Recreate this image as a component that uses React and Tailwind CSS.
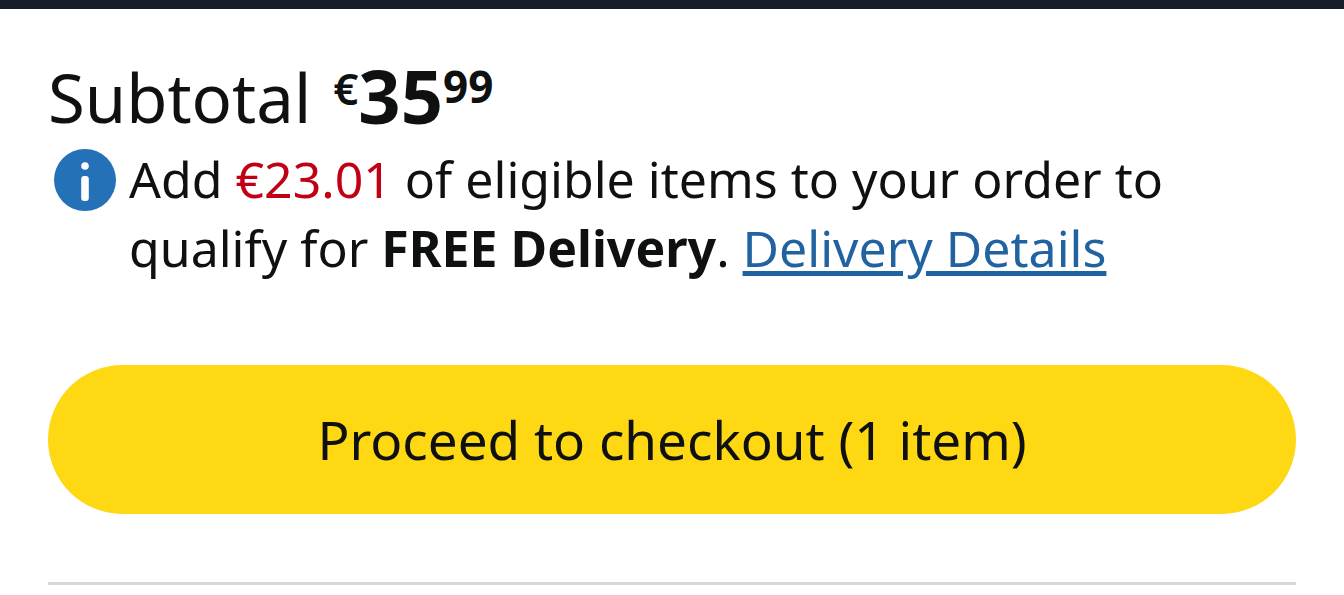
import React from "react";

const InfoIcon = () => (
  <svg viewBox="0 0 64 64" className="mt-[3px] size-16 shrink-0" aria-hidden="true">
    <circle cx="32" cy="32" r="31" fill="#2471b8" />
    <circle cx="32" cy="18" r="3.8" fill="#fff" />
    <rect x="28.2" y="28" width="7.6" height="25" rx="3" fill="#fff" />
  </svg>
);

const Price = ({ whole, cents }) => (
  <span className="flex items-start font-bold">
    <span className="text-[44px] leading-[56px] font-semibold">€</span>
    <span className="text-[74px] leading-[72px]">{whole}</span>
    <span className="text-[44px] leading-[52px]">{cents}</span>
  </span>
);

const App = () => (
  <main className="bg-white font-['Noto_Sans',sans-serif] text-[#0f1111]">
    <div className="h-[9px] bg-[#161e29]" />
    <section className="px-12 pt-[51px]">
      <h1 className="flex items-start gap-[22px] text-[67px] leading-[74px]">
        <span>Subtotal</span>
        <Price whole="35" cents="99" />
      </h1>

      <div className="mt-[11px] flex gap-3 pl-[5px]">
        <InfoIcon />
        <p className="text-[50px] leading-[69px]">
          Add <span className="text-[#c10015]">€23.01</span> of eligible items
          to your order to
          <br />
          qualify for <b>FREE Delivery</b>.{" "}
          <a
            href="#delivery"
            className="text-[#2162a1] underline decoration-5 underline-offset-4"
          >
            Delivery Details
          </a>
        </p>
      </div>

      <button
        type="button"
        className="mt-[82px] block h-[149px] w-full rounded-full bg-[#ffd814] text-[53px]"
      >
        Proceed to checkout (1 item)
      </button>

      <hr className="mt-[68px] border-t-3 border-[#d5d9d9]" />
    </section>
  </main>
);

export default App;
